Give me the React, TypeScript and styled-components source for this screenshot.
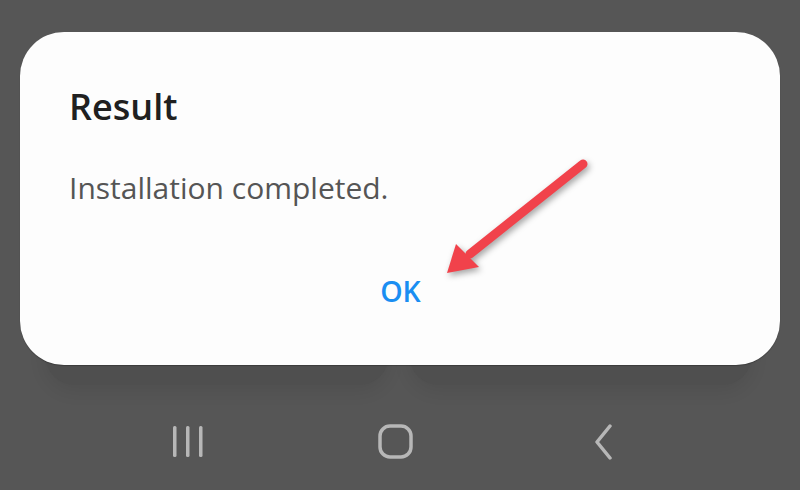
import React from 'react';
import styled, { createGlobalStyle } from 'styled-components';

const GlobalStyle = createGlobalStyle`
  html, body {
    margin: 0;
    padding: 0;
    background: #565656;
    font-family: 'Open Sans', 'Noto Sans', sans-serif;
  }
`;

const Page = styled.div`
  width: 800px;
  height: 490px;
  overflow: hidden;
  display: flex;
  flex-direction: column;
`;

// dialog sits on top of the faded cards of the screen behind it
const Stage = styled.div`
  display: grid;
  margin: 32px 20px 0;
  height: 353px;
`;

const GhostRow = styled.div`
  grid-area: 1 / 1;
  align-self: end;
  display: flex;
  gap: 20px;
  padding: 0 28px 0 25px;
  height: 120px;
`;

const GhostCard = styled.div`
  flex: 1;
  background: #4f4f4f;
  border-radius: 0 0 30px 30px;
  box-shadow: 0 6px 18px rgba(0, 0, 0, 0.08);
`;

const Dialog = styled.div`
  grid-area: 1 / 1;
  align-self: start;
  position: relative;
  height: 333px;
  box-sizing: border-box;
  background: #fdfdfd;
  border-radius: 44px;
  box-shadow: 0 1px 1px rgba(0, 0, 0, 0.25);
  padding: 53px 48px 0 49px;
  display: flex;
  flex-direction: column;
`;

const Title = styled.div`
  font-size: 36px;
  line-height: 44px;
  font-weight: 600;
  color: #202020;
`;

const Message = styled.div`
  margin-top: 39px;
  font-size: 30px;
  line-height: 40px;
  color: #555555;
`;

const OkButton = styled.div`
  margin-top: 65px;
  align-self: center;
  font-size: 28.5px;
  line-height: 36px;
  font-weight: 600;
  color: #1a8ef2;
`;

const ArrowSvg = styled.svg`
  position: absolute;
  left: 420px;
  top: 120px;
  overflow: visible;
  filter: drop-shadow(2px 3px 3px rgba(0, 0, 0, 0.35));
`;

const NavBar = styled.div`
  flex: 1;
  display: grid;
  grid-template-columns: repeat(3, 208px);
  justify-content: center;
  align-items: center;
  padding: 9px 8px 0 0;
`;

const NavSlot = styled.div`
  display: flex;
  justify-content: center;
  align-items: center;
`;

const NAV = '#b7b7b7';

function Arrow() {
  return (
    <ArrowSvg width="180" height="170" viewBox="0 0 180 170">
      <line x1="143" y1="12" x2="30" y2="102" stroke="#f1424b" strokeWidth="9" strokeLinecap="round" />
      <polygon points="7,121 16,92 39,115" fill="#f1424b" />
    </ArrowSvg>
  );
}

export default function App() {
  return (
    <>
      <GlobalStyle />
      <Page>
        <Stage>
          <GhostRow>
            <GhostCard />
            <GhostCard />
          </GhostRow>
          <Dialog>
            <Title>Result</Title>
            <Message>Installation completed.</Message>
            <OkButton>OK</OkButton>
            <Arrow />
          </Dialog>
        </Stage>
        <NavBar>
          <NavSlot>
            <svg width="34" height="34" viewBox="0 0 34 34">
              <rect x="2" y="1" width="3.5" height="31" rx="1.5" fill={NAV} />
              <rect x="15" y="1" width="3.5" height="31" rx="1.5" fill={NAV} />
              <rect x="28" y="1" width="3.5" height="31" rx="1.5" fill={NAV} />
            </svg>
          </NavSlot>
          <NavSlot>
            <svg width="36" height="36" viewBox="0 0 36 36">
              <rect x="2" y="2" width="31" height="31" rx="10" fill="none" stroke={NAV} strokeWidth="3.5" />
            </svg>
          </NavSlot>
          <NavSlot>
            <svg width="24" height="36" viewBox="0 0 24 36">
              <polyline points="18,2 5,18 18,34" fill="none" stroke={NAV} strokeWidth="3.5" strokeLinecap="round" strokeLinejoin="round" />
            </svg>
          </NavSlot>
        </NavBar>
      </Page>
    </>
  );
}
